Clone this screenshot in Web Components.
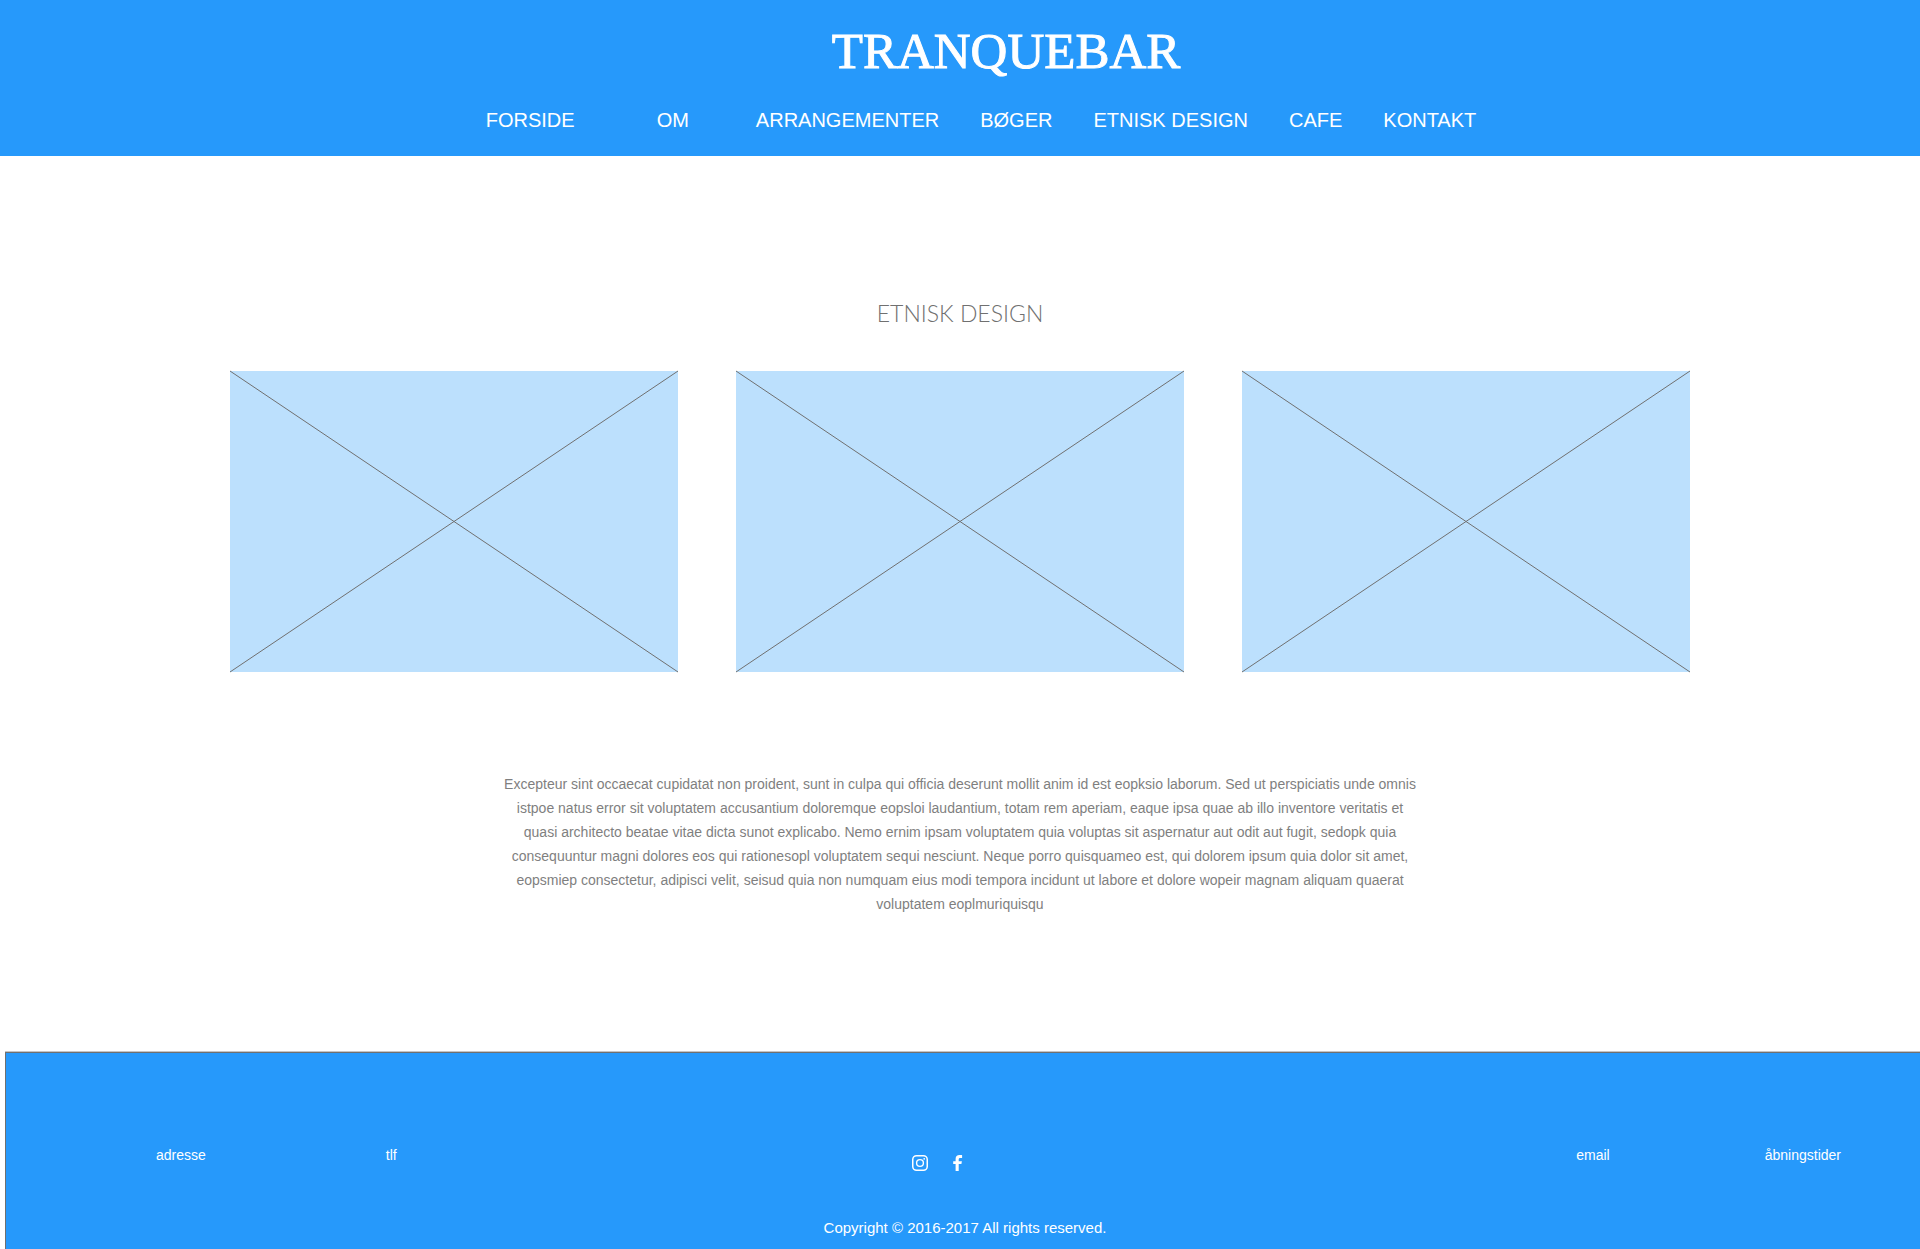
<!DOCTYPE html>
<html lang="da">
<head>
<meta charset="utf-8">
<meta name="viewport" content="width=device-width, initial-scale=1">
<title>Tranquebar – Etnisk design</title>
<style>
  body {
    margin: 0;
    min-height: 100vh;
    display: flex;
    flex-direction: column;
    background: #fff;
    font-family: "Liberation Sans", Arial, sans-serif;
    --blue: #2699fb;
    --pale-blue: #bce0fd;
    --line: #707070;
    --text: #7f7f7f;
  }
</style>
</head>
<body>
<site-header>
  <nav-link href="#forside" class="first">FORSIDE</nav-link>
  <nav-link href="#om" class="second">OM</nav-link>
  <nav-link href="#arrangementer">ARRANGEMENTER</nav-link>
  <nav-link href="#boeger">BØGER</nav-link>
  <nav-link href="#etnisk-design">ETNISK DESIGN</nav-link>
  <nav-link href="#cafe">CAFE</nav-link>
  <nav-link href="#kontakt">KONTAKT</nav-link>
</site-header>
<design-section>
  <span slot="title">ETNISK DESIGN</span>
  <image-placeholder></image-placeholder>
  <image-placeholder></image-placeholder>
  <image-placeholder></image-placeholder>
  <span slot="text">Excepteur sint occaecat cupidatat non proident, sunt in culpa qui officia deserunt mollit anim id est eopksio laborum. Sed ut perspiciatis unde omnis istpoe natus error sit voluptatem accusantium doloremque eopsloi laudantium, totam rem aperiam, eaque ipsa quae ab illo inventore veritatis et quasi architecto beatae vitae dicta sunot explicabo. Nemo ernim ipsam voluptatem quia voluptas sit aspernatur aut odit aut fugit, sedopk quia consequuntur magni dolores eos qui rationesopl voluptatem sequi nesciunt. Neque porro quisquameo est, qui dolorem ipsum quia dolor sit amet, eopsmiep consectetur, adipisci velit, seisud quia non numquam eius modi tempora incidunt ut labore et dolore wopeir magnam aliquam quaerat voluptatem eoplmuriquisqu</span>
</design-section>
<site-footer>
  <span slot="left">adresse</span>
  <span slot="left">tlf</span>
  <social-link slot="social" href="#instagram" label="Instagram">
    <svg width="16" height="16" viewBox="0 0 16 16" fill="none" stroke="#fff"><rect x=".75" y=".75" width="14.5" height="14.5" rx="3.8" stroke-width="1.5"/><circle cx="8" cy="8" r="3.4" stroke-width="1.4"/><circle cx="12.2" cy="3.8" r=".9" fill="#fff" stroke="none"/></svg>
  </social-link>
  <social-link slot="social" href="#facebook" label="Facebook">
    <svg width="16" height="16" viewBox="0 0 16 16" fill="#fff"><path d="M5.6 16V9H3.2V6.2h2.4V4.1C5.6 1.5 7 .1 9.5.1c1.2 0 2.300.1 2.600.1v2.700h-1.700c-1.400 0-1.700.7-1.700 1.600v1.700h3.200L11.400 9H8.700v7z"/></svg>
  </social-link>
  <span slot="right">email</span>
  <span slot="right">åbningstider</span>
  <span slot="copyright">Copyright © 2016-2017 All rights reserved.</span>
</site-footer>

<script>
  const define = (name, html, setup) => {
    const template = document.createElement('template');
    template.innerHTML = html;
    customElements.define(name, class extends HTMLElement {
      constructor() {
        super();
        this.attachShadow({ mode: 'open' }).append(template.content.cloneNode(true));
      }
      connectedCallback() {
        if (setup) setup(this, this.shadowRoot);
      }
    });
  };

  define('nav-link', `
    <style>
      :host { display: block; }
      a { color: inherit; text-decoration: none; }
    </style>
    <a><slot></slot></a>`,
    (host, root) => root.querySelector('a').setAttribute('href', host.getAttribute('href')));

  define('site-header', `
    <style>
      :host { display: block; background: var(--blue); color: #fff; }
      header { display: flex; flex-direction: column; align-items: center; gap: 27px; padding: 21px 0 24px; }
      h1 { margin: 0; padding-left: 92px; font: 400 51px/60px "Liberation Serif", "Times New Roman", serif; -webkit-text-stroke: 1px #fff; }
      nav { display: flex; gap: 41px; padding-left: 42px; font-size: 20px; line-height: 24px; }
      ::slotted(.first) { padding-right: 41px; }
      ::slotted(.second) { padding-right: 26px; }
    </style>
    <header>
      <h1>TRANQUEBAR</h1>
      <nav><slot></slot></nav>
    </header>`);

  define('image-placeholder', `
    <style>
      :host { display: block; aspect-ratio: 448 / 301; background: var(--pale-blue); }
      svg { display: block; width: 100%; height: 100%; overflow: visible; stroke: var(--line); stroke-width: 1px; }
    </style>
    <svg aria-hidden="true">
      <line x1="0" y1="0" x2="100%" y2="100%"/>
      <line x1="0" y1="100%" x2="100%" y2="0"/>
    </svg>`);

  define('design-section', `
    <style>
      :host { display: block; flex: 1; color: var(--text); }
      main { display: flex; flex-direction: column; align-items: center; padding: 141px 24px 0; }
      h2 { margin: 0; font: 300 23px/32px Lato, sans-serif; color: var(--line); }
      .images { display: grid; grid-template-columns: repeat(3, 1fr); gap: 58px; width: 100%; max-width: 1460px; margin-top: 42px; }
      p { margin: 100px 0; max-width: 920px; font-size: 14px; line-height: 24px; text-align: center; }
    </style>
    <main>
      <h2><slot name="title"></slot></h2>
      <div class="images"><slot></slot></div>
      <p><slot name="text"></slot></p>
    </main>`);

  define('social-link', `
    <style>
      :host, a { display: block; }
    </style>
    <a><slot></slot></a>`,
    (host, root) => {
      const link = root.querySelector('a');
      link.setAttribute('href', host.getAttribute('href'));
      link.setAttribute('aria-label', host.getAttribute('label'));
    });

  define('site-footer', `
    <style>
      :host { display: block; margin-left: 5px; color: #fff; background: var(--blue);
        border: solid var(--line); border-width: 1px 0 0 1px; box-shadow: 0 -1px #c4c4c4; }
      footer { padding: 94px 79px 11px 150px; font-size: 14px; line-height: 16px; }
      .row { display: flex; justify-content: space-between; align-items: flex-start; }
      .side { flex: 1; display: flex; gap: 180px; }
      .side.right { gap: 155px; justify-content: flex-end; }
      .social { display: flex; gap: 22px; padding: 8px 120px 0 0; }
      .copyright { margin: 47px 0 0; padding-right: 67px; font-size: 15px; line-height: 20px; text-align: center; }
      ::slotted(social-link) { width: 16px; height: 16px; }
    </style>
    <footer>
      <div class="row">
        <div class="side"><slot name="left"></slot></div>
        <div class="social"><slot name="social"></slot></div>
        <div class="side right"><slot name="right"></slot></div>
      </div>
      <p class="copyright"><slot name="copyright"></slot></p>
    </footer>`);
</script>
</body>
</html>
